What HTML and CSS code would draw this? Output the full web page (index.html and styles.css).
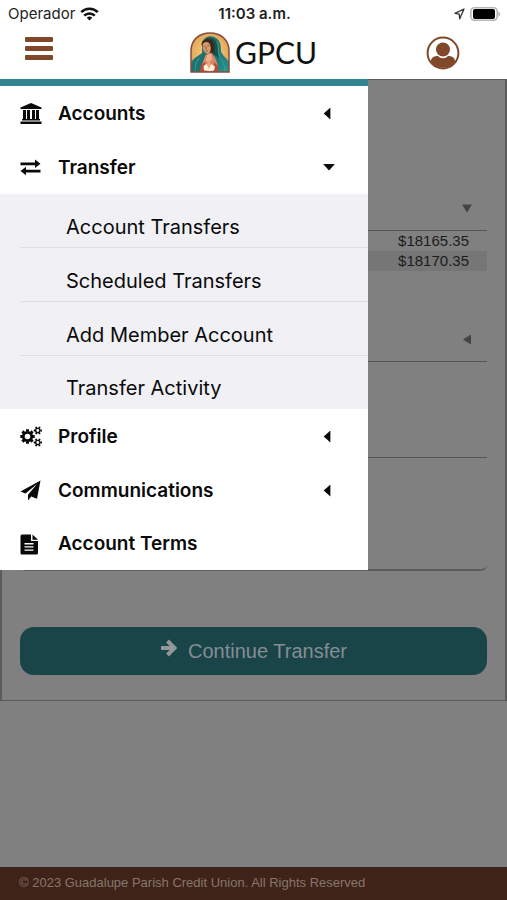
FILE: index.html
```html
<!DOCTYPE html>
<html lang="en">
<head>
<meta charset="utf-8">
<meta name="viewport" content="width=device-width, initial-scale=1">
<title>GPCU</title>
<link rel="stylesheet" href="styles.css">
</head>
<body>
<header class="top">
  <div class="status">
    <div class="carrier"><span>Operador</span>
      <svg width="19" height="14" viewBox="0 0 19 14" fill="none" stroke="#111" stroke-width="2.6"><path d="M1.2 5.2a11.8 11.8 0 0 1 16.600 0M4.200 8.600a7.600 7.600 0 0 1 10.600 0"/><path d="M9.500 13.600 6.700 10.800a4 4 0 0 1 5.600 0z" fill="#111" stroke="none"/></svg>
    </div>
    <time class="clock">11:03 a.m.</time>
    <div class="indicators">
      <svg width="11" height="12" viewBox="0 0 11 12" fill="none" stroke="#333" stroke-width="1.3" stroke-linejoin="round"><path d="M10 1 1 5.300l4.300.9.4 4.600z"/></svg>
      <svg width="31" height="14" viewBox="0 0 31 14"><rect x=".8" y=".8" width="26.4" height="12.4" rx="3.6" fill="#fff" stroke="#b5b5b5" stroke-width="1.6"/><rect x="3" y="2" width="22" height="10" rx="2" fill="#000"/><path d="M28.400 4.500c2.400.7 2.400 4.300 0 5z" fill="#b5b5b5"/></svg>
    </div>
  </div>
  <div class="bar">
    <button class="icon-button" aria-label="Menu">
      <svg width="28" height="24" viewBox="0 0 28 24" fill="#804728"><rect width="28" height="5" rx="1"/><rect y="9" width="28" height="5" rx="1"/><rect y="18" width="28" height="5" rx="1"/></svg>
    </button>
    <a class="brand" href="#">
      <svg width="40" height="41" viewBox="0 0 40 41" aria-hidden="true">
        <defs>
          <clipPath id="arch"><path d="M1 40V19C1 8 9 1 20 1s19 7 19 18v21z"/></clipPath>
          <radialGradient id="glow"><stop offset="0" stop-color="#fbdc8a"/><stop offset="1" stop-color="#e3a457"/></radialGradient>
          <linearGradient id="cloak" x2="1" y2="1"><stop stop-color="#2f7f78"/><stop offset=".5" stop-color="#1d706e"/><stop offset="1" stop-color="#2a9794"/></linearGradient>
        </defs>
        <g clip-path="url(#arch)">
          <path fill="url(#glow)" d="M0 0h40v41H0z"/>
          <path fill="url(#cloak)" d="M12 11c1-5 7-8 12-6 6 2 7 8 7 14 1 5 6 6 9 13v9H1V31c2-5 6-6 11-10z"/>
          <path fill="#17504d" d="M16 6c6-2 10 1 11 7 1 5 0 8 2 13l-6-4-4-9z"/>
          <path fill="#3f261b" d="M11.500 13c0-7 10-8 12-2 1 4 1 8-1 11l-6-1z"/>
          <path fill="#d49a70" d="M12.500 13.500c0-4 6-5 7.500-1 1.500 4 .5 8-1.500 9.500-3.500 0-6-4-6-8.500z"/>
          <path fill="none" stroke="#6b3a28" stroke-width=".7" d="m13.500 14.500 1.800-.5m2-.4 1.800-.3m-3 1.500-.2 2.500m-.2 1.800 2-.4"/>
          <path fill="#d88768" d="m15.500 23 6-2.500 4 6 2 6 1 8H10l2-8z"/>
          <path fill="#efb08f" d="m17 23 4-1.500 1 6-4 3-2-2z"/>
          <path fill="#b54c3a" d="m11 33 4-3 2 10h-7zM24 30l4 4v7l-5-1z"/>
          <path fill="#fff0d8" d="m13.500 34 3-2 2.500 3 2-3 4 2.500-1 4-4 .5-6-.5z"/>
          <path fill="#e7a67c" d="m19 28 2 5-2 4-2-4z"/>
          <path fill="none" stroke="#45a39c" stroke-width=".8" d="M27 9c3 6 0 12 4 18 3 4 4 9 4 13M9 26c-3 4-4 9-4 14"/>
        </g>
        <path d="M1 40V19C1 8 9 1 20 1s19 7 19 18v21z" fill="none" stroke="#824f3d" stroke-width="1.500"/>
      </svg>
      <span>GPCU</span>
    </a>
    <button class="icon-button profile" aria-label="My profile">
      <svg width="34" height="34" viewBox="0 0 34 34"><defs><clipPath id="disc"><circle cx="17" cy="17" r="14.8"/></clipPath></defs><circle cx="17" cy="17" r="15.400" fill="#fff" stroke="#804728" stroke-width="2"/><g fill="#804728"><circle cx="17" cy="13.500" r="7"/><path clip-path="url(#disc)" d="M5 32v-7c0-4 4-5 7-5 3 3 7 3 10 0 3 0 7 1 7 5v7z"/></g></svg>
    </button>
  </div>
</header>

<div class="stage">
  <nav class="menu" aria-label="Main">
    <button class="item"><svg class="glyph" viewBox="0 0 22 21"><path d="M11 0 21.500 4.500V6H.5V4.500zM3 7h3v9h1V7h3v9h2V7h3v9h1V7h3v9h1v1.500H2V16h1zM.5 18.500h21V21H.5z"/></svg><span>Accounts</span><i class="caret left"></i></button>
    <button class="item" aria-expanded="true"><svg class="glyph" viewBox="0 0 22 21"><path d="M.5 5.500h14.500v-3l5.500 4.300-5.500 4.200V8.300H.5zM20.500 12.700H6v-3L.5 14l5.500 4.300v-2.800h14.500z"/></svg><span>Transfer</span><i class="caret down"></i></button>
    <ul class="submenu">
      <li><a href="#">Account Transfers</a></li>
      <li><a href="#">Scheduled Transfers</a></li>
      <li><a href="#">Add Member Account</a></li>
      <li><a href="#">Transfer Activity</a></li>
    </ul>
    <button class="item"><svg class="glyph" viewBox="0 0 22 21" fill="none" stroke="#0a0a0a"><g class="gears"><circle cx="7.500" cy="10.500" r="4.200" stroke-width="2.800"/><path stroke-width="3" d="M7.500 3.300v2.200m0 10v2.200M.3 10.500h2.200m10 0h2.200M2.400 5.400 4 7m7 7 1.600 1.600m0-10.200L11 7m-7 7-1.600 1.600"/><g id="cog"><circle cx="17.800" cy="4.500" r="2.100" stroke-width="1.400"/><path stroke-width="1.800" d="M15.800.9l.7 1.300m2.600 4.600.7 1.300m0-7.200-.7 1.300m-2.600 4.600-.7 1.300M13.700 4.500h1.500m5.200 0h1.500"/></g><use href="#cog" y="12"/></g></svg><span>Profile</span><i class="caret left"></i></button>
    <button class="item"><svg class="glyph" viewBox="0 0 22 21"><path d="M20.500.5.5 11.500l5 2.100L17 4 8 14.700v5.800l3.200-4 5.800 2.300z"/></svg><span>Communications</span><i class="caret left"></i></button>
    <a class="item" href="#"><svg class="glyph" viewBox="0 0 22 21"><path fill-rule="evenodd" d="M2 .5h9V7h7v12q0 1.500-1.500 1.500h-15Q.5 20.500.5 19V2Q.5.500 2 .5zM12.500.5 18 5.700h-5.500zM4.500 9v1.400h9V9zm0 3.200v1.400h9v-1.400zm0 3.200v1.400h9v-1.400z"/></svg><span>Account Terms</span></a>
  </nav>

  <main class="page">
    <form class="form">
      <button type="button" class="picker from" aria-label="From account"><i class="arrow down"></i></button>
      <table class="balances">
        <tr><td>$18165.35</td></tr>
        <tr><td>$18170.35</td></tr>
      </table>
      <button type="button" class="picker to" aria-label="To account"><i class="arrow left"></i></button>
      <input class="line" type="text" aria-label="Amount">
      <input class="memo" type="text" aria-label="Memo">
      <button type="button" class="submit"><svg width="18" height="19" viewBox="0 0 18 19" fill="none" stroke="currentColor" stroke-width="4"><path d="M1 9h14M7.500 2l7 7-7 7"/></svg><span>Continue Transfer</span></button>
    </form>
  </main>
</div>
<footer class="footer">© 2023 Guadalupe Parish Credit Union. All Rights Reserved</footer>
</body>
</html>
```
FILE: styles.css
```css
* { box-sizing: border-box; }
body {
  margin: 0;
  min-height: 100vh;
  display: flex;
  flex-direction: column;
  background: #808080;
  font-family: "Liberation Sans", sans-serif;
}
button { border: 0; padding: 0; background: none; font: inherit; color: inherit; }
a { color: inherit; text-decoration: none; }
svg { display: block; flex: none; }

.top { background: #fff; }
.status, .bar {
  display: grid;
  grid-template-columns: 1fr auto 1fr;
  align-items: center;
}
.status {
  height: 26px;
  padding: 1px 6px 0 8px;
  font: 15px/18px Inter, sans-serif;
  color: #222;
}
.carrier, .indicators { display: flex; align-items: center; gap: 5px; }
.indicators { justify-content: flex-end; }
.clock { font-weight: 600; }
.bar { height: 53px; padding: 0 25px; }
.bar .icon-button:first-child { justify-self: start; padding-bottom: 7px; }
.bar .profile { justify-self: end; margin-right: 22px; }
.brand { display: flex; align-items: center; gap: 5px; font: 30px/38px Lato, sans-serif; color: #111; }
.brand span { padding-bottom: 2px; }

.stage { position: relative; flex: 1; }
.menu {
  position: absolute;
  top: 0;
  left: 0;
  width: 368px;
  max-width: 100%;
  border-top: 7px solid #318590;
  background: #fff;
  color: #0a0a0a;
  font: 19px/24px Inter, sans-serif;
}
.item {
  display: flex;
  align-items: center;
  width: 100%;
  height: 54px;
  padding: 1px 32px 0 20px;
  gap: 16px;
  font-weight: 600;
}
.item:last-child { height: 53px; }
.glyph { width: 22px; height: 21px; fill: #0a0a0a; }
.gears { fill: none; }
.caret { width: 14px; height: 12px; background: currentColor; }
.caret.down { clip-path: polygon(8% 20%, 92% 20%, 50% 75%); }
.caret.left { clip-path: polygon(12% 50%, 60% 0, 60% 100%); }
.item .caret { margin-left: auto; }
.submenu { margin: 0; padding: 0 0 0 20px; list-style: none; background: #f0f0f5; }
.submenu li { height: 54px; padding: 21px 0 0 46px; border-bottom: 1px solid #dfdfe3; font-size: 20px; }
.submenu li:last-child { border: 0; height: 53px; padding-top: 20px; }

.page { border: 2px solid #5c5c5c; border-top-width: 1px; border-bottom-width: 1px; }
.form { display: flex; flex-direction: column; padding: 100px 18px 25px; color: #1c1c1c; }
.picker {
  display: flex;
  justify-content: flex-end;
  align-items: center;
  height: 51px;
  padding: 7px 15px 0 0;
  border-bottom: 1px solid #555;
  color: #444;
}
.arrow { width: 10px; height: 10px; background: currentColor; }
.arrow.down { clip-path: polygon(0 10%, 100% 10%, 50% 90%); }
.arrow.left { clip-path: polygon(10% 50%, 90% 0, 90% 100%); }
.to { margin-top: 40px; }
.balances { border-collapse: collapse; font-size: 15px; line-height: 20px; text-align: right; }
.balances td { padding: 0 18px 0 0; }
.balances tr:nth-child(even) { background: #767676; }
.line, .memo { width: 100%; background: none; border: 0; padding: 0 10px; font: inherit; }
.line { height: 48px; margin-top: 48px; border-bottom: 1px solid #555; }
.memo { height: 48px; margin-top: 65px; border-bottom: 2px solid #5c5c5c; border-radius: 6px; }
.submit {
  display: flex;
  justify-content: center;
  gap: 10px;
  height: 48px;
  margin-top: 56px;
  padding-top: 12px;
  border-radius: 14px;
  background: #194548;
  color: #858d93;
  font-size: 20px;
  line-height: 24px;
}
.submit svg { color: #92979b; }

.footer { height: 33px; padding: 6px 19px; background: #402318; color: #85776d; font-size: 13px; line-height: 20px; }
```
